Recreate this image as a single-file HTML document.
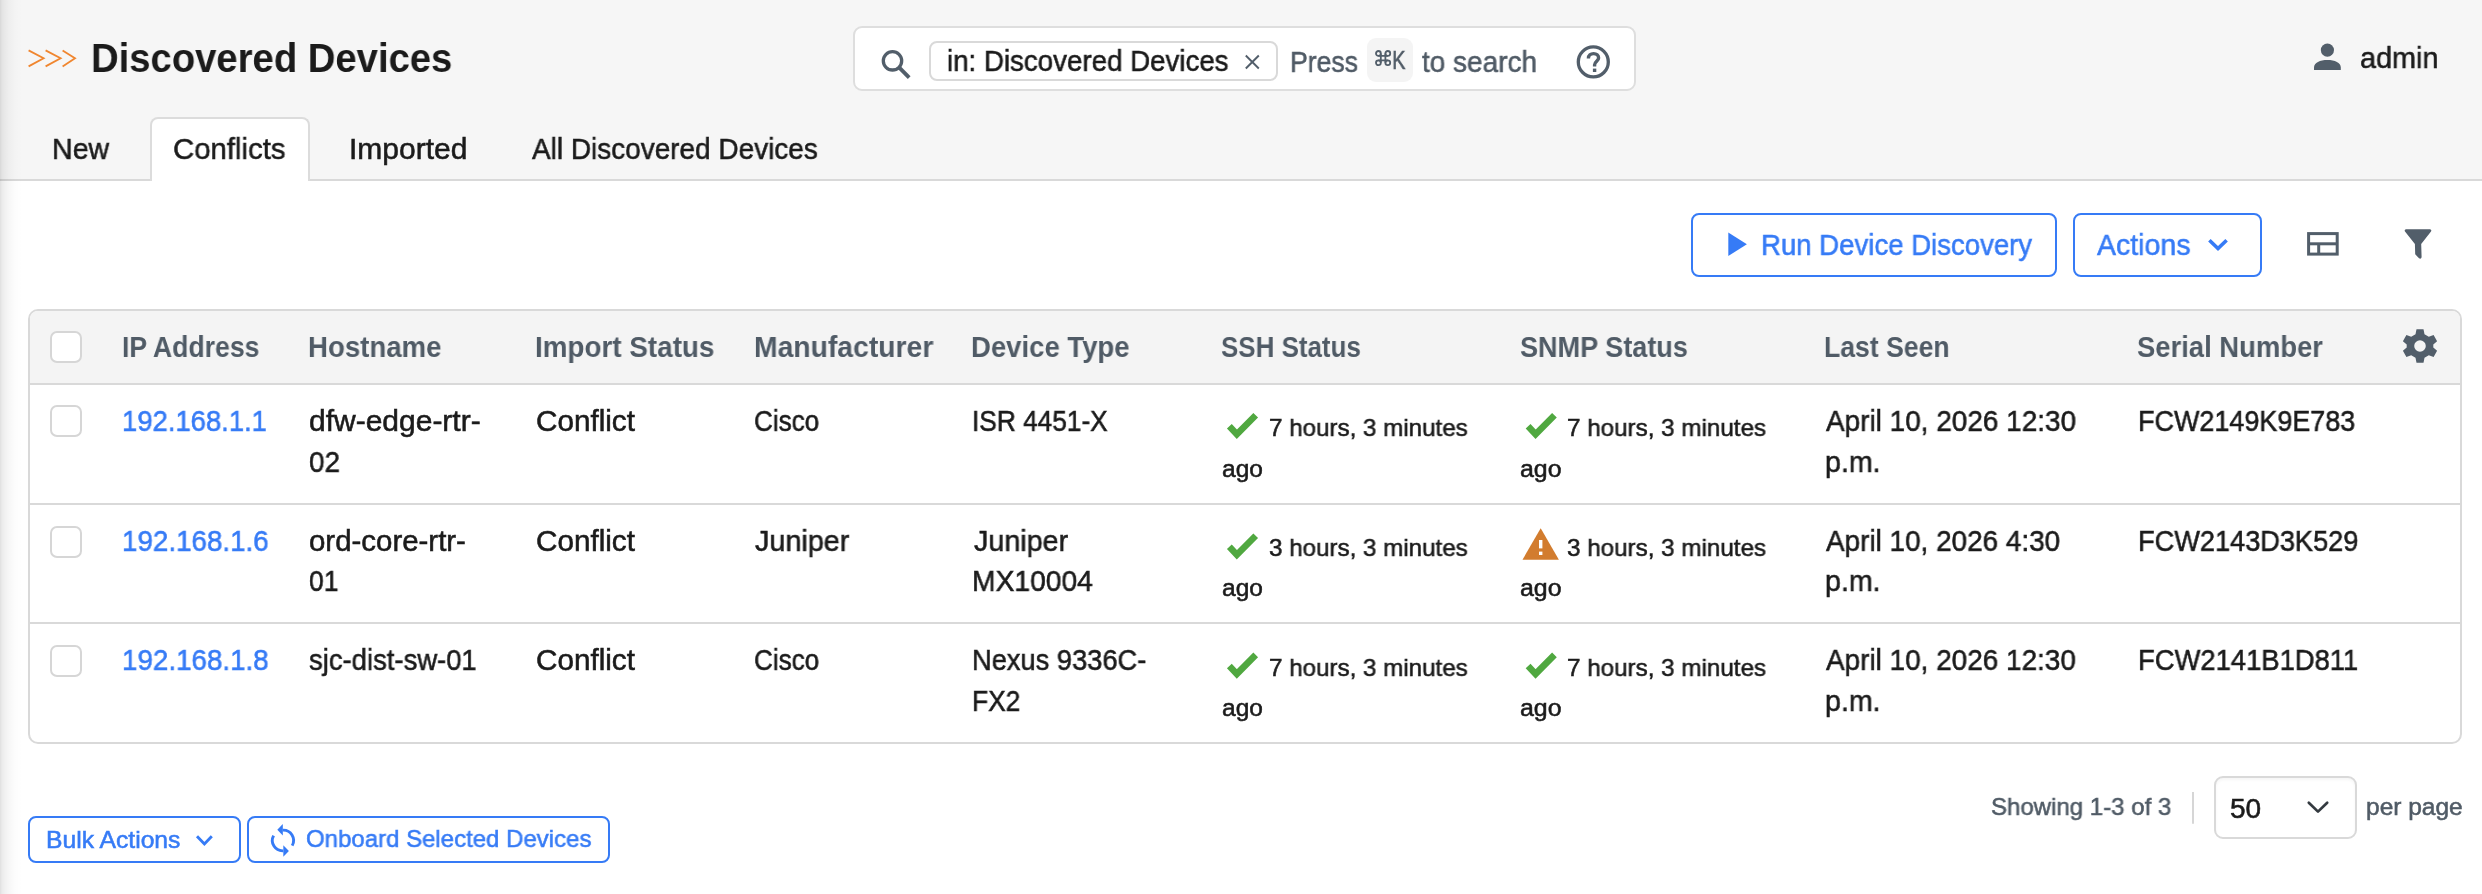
<!DOCTYPE html>
<html><head><meta charset="utf-8"><style>
html,body{margin:0;padding:0}
body{width:2482px;height:894px;overflow:hidden;position:relative;background:#fff;font-family:"Liberation Sans",sans-serif}
.abs{position:absolute}
.t{position:absolute;white-space:pre;line-height:1;transform-origin:0 0;will-change:transform}
.hdr{position:absolute;left:0;top:0;width:2482px;height:180px;background:#f6f6f6}
.hline{position:absolute;left:0;top:179px;width:2482px;height:2px;background:#d9d9d9}
.tabact{position:absolute;left:150px;top:117px;width:156px;height:62px;background:#fff;border:2px solid #dcdcdc;border-bottom:none;border-radius:8px 8px 0 0}
.btn{position:absolute;border:2px solid #367bf6;border-radius:8px}
.cb{position:absolute;width:28px;height:28px;border:2px solid #d6d6d6;border-radius:7px;background:#fff}
.shadow{position:absolute;left:0;top:0;width:24px;height:894px;background:linear-gradient(to right,rgba(0,0,0,0.125) 0px,rgba(0,0,0,0.08) 2px,rgba(0,0,0,0.055) 5px,rgba(0,0,0,0.03) 9px,rgba(0,0,0,0.012) 15px,rgba(0,0,0,0) 22px)}
</style></head>
<body>

<div class="hdr"></div>
<div class="hline"></div>
<div class="tabact"></div>
<!-- chevrons -->
<svg class="abs" style="left:0;top:0" width="120" height="100">
  <g fill="none" stroke="#f0862f" stroke-width="1.8" stroke-linecap="butt" stroke-linejoin="miter">
    <polyline points="28.6,50.4 43.6,58.3 28.6,66.4"/>
    <polyline points="45.6,50.4 60.6,58.3 45.6,66.4"/>
    <polyline points="62.6,50.4 75,58.3 62.6,66.4"/>
  </g>
</svg>
<div class="abs" style="left:853px;top:26px;width:779px;height:61px;border:2px solid #dedede;border-radius:9px;background:#fff"></div>
<svg class="abs" style="left:0;top:0" width="1700" height="100">
  <circle cx="892.5" cy="60.8" r="9.2" fill="none" stroke="#525e6a" stroke-width="3.3"/>
  <line x1="899.3" y1="67.6" x2="909.2" y2="77.6" stroke="#525e6a" stroke-width="3.9"/>
  <line x1="1245.8" y1="55.5" x2="1258.8" y2="68.5" stroke="#525e6a" stroke-width="1.9"/>
  <line x1="1258.8" y1="55.5" x2="1245.8" y2="68.5" stroke="#525e6a" stroke-width="1.9"/>
  <circle cx="1593.3" cy="61.9" r="15" fill="none" stroke="#525e6a" stroke-width="3.3"/>
  <path d="M1588.4 58.4 C1588.4 55.3 1590.7 53.6 1593.6 53.6 C1596.5 53.6 1598.6 55.5 1598.6 57.9 C1598.6 60.9 1594.6 61.5 1594.6 64.8 L1594.6 66.6" fill="none" stroke="#525e6a" stroke-width="3.4"/>
  <rect x="1592.9" y="68.6" width="3.4" height="3.4" fill="#525e6a"/>
</svg>
<div class="abs" style="left:929px;top:41px;width:345px;height:36px;border:2px solid #d9d9d9;border-radius:8px"></div>
<div class="abs" style="left:1367px;top:38px;width:46px;height:44px;background:#f4f4f4;border-radius:9px"></div>
<svg class="abs" style="left:1374.5px;top:49.8px" width="17" height="17" viewBox="0 0 17 17">
 <g fill="none" stroke="#525e6a" stroke-width="1.8">
  <circle cx="3.4" cy="3.4" r="2.4"/><circle cx="12.8" cy="3.4" r="2.4"/><circle cx="3.4" cy="12.8" r="2.4"/><circle cx="12.8" cy="12.8" r="2.4"/>
  <path d="M5.8 3.4 V12.8 M10.4 3.4 V12.8 M3.4 5.8 H12.8 M3.4 10.4 H12.8"/>
 </g>
</svg>
<svg class="abs" style="left:2300px;top:30px" width="60" height="60">
  <circle cx="27.4" cy="20.1" r="6.6" fill="#525e6a"/>
  <path d="M14 40 L14 37.5 C14 32.5 20 30 27.4 30 C34.8 30 40.8 32.5 40.8 37.5 L40.8 40 Z" fill="#525e6a"/>
</svg>
<!-- buttons -->
<div class="btn" style="left:1691px;top:213px;width:362px;height:60px"></div>
<div class="btn" style="left:2073px;top:213px;width:185px;height:60px"></div>
<svg class="abs" style="left:0;top:200px" width="2482" height="70">
  <path d="M1728.3 32.6 L1746.9 44.2 L1728.3 55.9 Z" fill="#367bf6"/>
  <polyline points="2209.4,40.2 2218,48.6 2226.6,40.2" fill="none" stroke="#367bf6" stroke-width="3.6"/>
  <rect x="2308.6" y="33.6" width="28.6" height="20.5" fill="none" stroke="#525e6a" stroke-width="3"/>
  <line x1="2308.6" y1="43.8" x2="2337.2" y2="43.8" stroke="#525e6a" stroke-width="3"/>
  <line x1="2318.7" y1="43.8" x2="2318.7" y2="54" stroke="#525e6a" stroke-width="3"/>
  <path d="M2406 29.2 L2430 29.2 Q2432 29.6 2431 31.5 L2421.2 44 L2421.6 57.3 Q2421 59.5 2419 58.3 L2415.2 54.2 L2414.9 44 L2405 31.5 Q2404 29.6 2406 29.2 Z" fill="#525e6a"/>
</svg>
<!-- table -->
<div class="abs" style="left:28px;top:309px;width:2430px;height:431px;border:2px solid #d9d9d9;border-radius:10px;overflow:hidden;background:#fff">
  <div style="position:absolute;left:0;top:0;right:0;height:72px;background:#f4f4f4;border-bottom:2px solid #d9d9d9"></div>
  <div style="position:absolute;left:0;top:192px;right:0;height:2px;background:#d9d9d9"></div>
  <div style="position:absolute;left:0;top:311px;right:0;height:2px;background:#d9d9d9"></div>
</div>
<div class="cb" style="left:50px;top:331px"></div>
<div class="cb" style="left:50px;top:405px"></div>
<div class="cb" style="left:50px;top:525.5px"></div>
<div class="cb" style="left:50px;top:644.5px"></div>
<svg class="abs" style="left:2400px;top:326px" width="40" height="40" viewBox="0 0 40 40">
 <path fill="#525e6a" fill-rule="evenodd" d="M16.5 3.3 L23.5 3.3 L24.5 8.2 L28.8 10.7 L33.6 9.1 L37.1 15.2 L33.3 18.5 L33.3 21.5 L37.1 24.8 L33.6 30.9 L28.8 29.3 L24.5 31.8 L23.5 36.7 L16.5 36.7 L15.5 31.8 L11.2 29.3 L6.4 30.9 L2.9 24.8 L6.7 21.5 L6.7 18.5 L2.9 15.2 L6.4 9.1 L11.2 10.7 L15.5 8.2 Z M20 14.2 A5.8 5.8 0 1 0 20 25.8 A5.8 5.8 0 1 0 20 14.2 Z"/>
</svg>
<svg class="abs" style="left:0;top:0" width="2482" height="894"><path d="M1229.35 426.20 L1236.85 434.20 L1255.70 415.20" fill="none" stroke="#50a840" stroke-width="6.6" stroke-linejoin="miter"/><path d="M1528.10 426.20 L1535.60 434.20 L1554.45 415.20" fill="none" stroke="#50a840" stroke-width="6.6" stroke-linejoin="miter"/><path d="M1229.35 546.70 L1236.85 554.70 L1255.70 535.70" fill="none" stroke="#50a840" stroke-width="6.6" stroke-linejoin="miter"/><path d="M1540.7 528.30 L1558.9 559.70 L1522.5 559.70 Z" fill="#d27c2e"/><rect x="1539" y="540.00" width="3.4" height="8.4" fill="#fff"/><rect x="1539" y="551.60" width="3.4" height="3.4" fill="#fff"/><path d="M1229.35 665.90 L1236.85 673.90 L1255.70 654.90" fill="none" stroke="#50a840" stroke-width="6.6" stroke-linejoin="miter"/><path d="M1528.10 665.90 L1535.60 673.90 L1554.45 654.90" fill="none" stroke="#50a840" stroke-width="6.6" stroke-linejoin="miter"/></svg>

<div class="btn" style="left:28px;top:816px;width:209px;height:43px"></div>
<div class="btn" style="left:247px;top:816px;width:359px;height:43px"></div>
<svg class="abs" style="left:0;top:780px" width="2482" height="100">
  <polyline points="197,56.3 204.4,64 211.8,56.3" fill="none" stroke="#367bf6" stroke-width="2.9"/>
  <g fill="none" stroke="#367bf6" stroke-width="2.9">
    <path d="M282.6 50.2 A10.3 10.3 0 0 1 292.2 65.6"/>
    <path d="M273.6 55.6 A10.3 10.3 0 0 0 283.3 70.8"/>
  </g>
  <path d="M277.3 49.8 L282.8 44 L282.8 55.6 Z" fill="#367bf6"/>
  <path d="M288.9 71 L283.3 65.3 L283.3 76.8 Z" fill="#367bf6"/>
  <line x1="2193" y1="12" x2="2193" y2="43.7" stroke="#d6d6d6" stroke-width="2"/>
  <polyline points="2308.8,22.7 2318,31.6 2327.2,22.7" fill="none" stroke="#343a40" stroke-width="2.7" stroke-linecap="round" stroke-linejoin="round"/>
</svg>
<div class="abs" style="left:2214px;top:776px;width:139px;height:59px;border:2px solid #d9d9d9;border-radius:9px;box-shadow:inset 0 2px 3px rgba(0,0,0,0.04)"></div>

<span id="title" class="t" style="left:91.00px;top:36.97px;font-size:41.5px;font-weight:700;color:#1b1b1b;transform:scaleX(0.9214);-webkit-text-stroke:0px #1b1b1b">Discovered Devices</span>
<span id="chip" class="t" style="left:946.80px;top:45.61px;font-size:30px;font-weight:400;color:#1b1b1b;transform:scaleX(0.9228);-webkit-text-stroke:0.55px #1b1b1b">in: Discovered Devices</span>
<span id="press" class="t" style="left:1290.40px;top:46.51px;font-size:30px;font-weight:400;color:#505b66;transform:scaleX(0.8852);-webkit-text-stroke:0.55px #505b66">Press</span>
<span id="kbd" class="t" style="left:1392.00px;top:46.89px;font-size:26px;font-weight:400;color:#505b66;transform:scaleX(0.7816);-webkit-text-stroke:0.55px #505b66">K</span>
<span id="tosearch" class="t" style="left:1422.40px;top:46.51px;font-size:30px;font-weight:400;color:#505b66;transform:scaleX(0.9321);-webkit-text-stroke:0.55px #505b66">to search</span>
<span id="admin" class="t" style="left:2359.60px;top:42.51px;font-size:30px;font-weight:400;color:#1b1b1b;transform:scaleX(0.9609);-webkit-text-stroke:0.55px #1b1b1b">admin</span>
<span id="tab_new" class="t" style="left:51.90px;top:133.50px;font-size:30px;font-weight:400;color:#1b1b1b;transform:scaleX(0.9530);-webkit-text-stroke:0.55px #1b1b1b">New</span>
<span id="tab_conf" class="t" style="left:173.40px;top:133.80px;font-size:30px;font-weight:400;color:#1b1b1b;transform:scaleX(0.9781);-webkit-text-stroke:0.55px #1b1b1b">Conflicts</span>
<span id="tab_imp" class="t" style="left:349.00px;top:133.50px;font-size:30px;font-weight:400;color:#1b1b1b;transform:scaleX(0.9985);-webkit-text-stroke:0.55px #1b1b1b">Imported</span>
<span id="tab_all" class="t" style="left:532.40px;top:133.50px;font-size:30px;font-weight:400;color:#1b1b1b;transform:scaleX(0.9317);-webkit-text-stroke:0.55px #1b1b1b">All Discovered Devices</span>
<span id="run" class="t" style="left:1761.40px;top:230.20px;font-size:30px;font-weight:400;color:#367bf6;transform:scaleX(0.9188);-webkit-text-stroke:0.55px #367bf6">Run Device Discovery</span>
<span id="actions" class="t" style="left:2096.80px;top:230.20px;font-size:30px;font-weight:400;color:#367bf6;transform:scaleX(0.9501);-webkit-text-stroke:0.55px #367bf6">Actions</span>
<span id="h_ip" class="t" style="left:122.20px;top:333.45px;font-size:29px;font-weight:700;color:#505b66;transform:scaleX(0.9164);-webkit-text-stroke:0px #505b66">IP Address</span>
<span id="h_host" class="t" style="left:308.20px;top:333.45px;font-size:29px;font-weight:700;color:#505b66;transform:scaleX(0.9523);-webkit-text-stroke:0px #505b66">Hostname</span>
<span id="h_imp" class="t" style="left:535.40px;top:333.45px;font-size:29px;font-weight:700;color:#505b66;transform:scaleX(0.9599);-webkit-text-stroke:0px #505b66">Import Status</span>
<span id="h_man" class="t" style="left:753.80px;top:333.45px;font-size:29px;font-weight:700;color:#505b66;transform:scaleX(0.9759);-webkit-text-stroke:0px #505b66">Manufacturer</span>
<span id="h_dt" class="t" style="left:971.00px;top:333.45px;font-size:29px;font-weight:700;color:#505b66;transform:scaleX(0.9486);-webkit-text-stroke:0px #505b66">Device Type</span>
<span id="h_ssh" class="t" style="left:1221.20px;top:333.45px;font-size:29px;font-weight:700;color:#505b66;transform:scaleX(0.8943);-webkit-text-stroke:0px #505b66">SSH Status</span>
<span id="h_snmp" class="t" style="left:1520.00px;top:333.45px;font-size:29px;font-weight:700;color:#505b66;transform:scaleX(0.9332);-webkit-text-stroke:0px #505b66">SNMP Status</span>
<span id="h_last" class="t" style="left:1824.20px;top:333.45px;font-size:29px;font-weight:700;color:#505b66;transform:scaleX(0.9166);-webkit-text-stroke:0px #505b66">Last Seen</span>
<span id="h_ser" class="t" style="left:2136.80px;top:333.45px;font-size:29px;font-weight:700;color:#505b66;transform:scaleX(0.9457);-webkit-text-stroke:0px #505b66">Serial Number</span>
<span id="bulk" class="t" style="left:45.50px;top:827.68px;font-size:24px;font-weight:400;color:#367bf6;transform:scaleX(1.0283);-webkit-text-stroke:0.55px #367bf6">Bulk Actions</span>
<span id="onboard" class="t" style="left:306.40px;top:827.26px;font-size:24.5px;font-weight:400;color:#367bf6;transform:scaleX(0.9795);-webkit-text-stroke:0.55px #367bf6">Onboard Selected Devices</span>
<span id="showing" class="t" style="left:1991.20px;top:795.36px;font-size:24.5px;font-weight:400;color:#505b66;transform:scaleX(0.9804);-webkit-text-stroke:0.55px #505b66">Showing 1-3 of 3</span>
<span id="fifty" class="t" style="left:2230.10px;top:794.70px;font-size:28px;font-weight:400;color:#1b1b1b;transform:scaleX(0.9890);-webkit-text-stroke:0.55px #1b1b1b">50</span>
<span id="perpage" class="t" style="left:2365.80px;top:795.36px;font-size:24.5px;font-weight:400;color:#505b66;transform:scaleX(0.9957);-webkit-text-stroke:0.55px #505b66">per page</span>
<span id="r0_ip" class="t" style="left:121.60px;top:406.55px;font-size:29px;font-weight:400;color:#367bf6;transform:scaleX(0.9460);-webkit-text-stroke:0.55px #367bf6">192.168.1.1</span>
<span id="r0_host0" class="t" style="left:309.00px;top:406.55px;font-size:29px;font-weight:400;color:#1b1b1b;transform:scaleX(1.0342);-webkit-text-stroke:0.55px #1b1b1b">dfw-edge-rtr-</span>
<span id="r0_host1" class="t" style="left:309.00px;top:448.25px;font-size:29px;font-weight:400;color:#1b1b1b;transform:scaleX(0.9591);-webkit-text-stroke:0.55px #1b1b1b">02</span>
<span id="r0_imp" class="t" style="left:536.20px;top:406.55px;font-size:29px;font-weight:400;color:#1b1b1b;transform:scaleX(1.0231);-webkit-text-stroke:0.55px #1b1b1b">Conflict</span>
<span id="r0_man" class="t" style="left:754.00px;top:406.55px;font-size:29px;font-weight:400;color:#1b1b1b;transform:scaleX(0.8975);-webkit-text-stroke:0.55px #1b1b1b">Cisco</span>
<span id="r0_dt0" class="t" style="left:972.00px;top:406.55px;font-size:29px;font-weight:400;color:#1b1b1b;transform:scaleX(0.9048);-webkit-text-stroke:0.55px #1b1b1b">ISR 4451-X</span>
<span id="r0_ssh" class="t" style="left:1268.60px;top:415.86px;font-size:24.5px;font-weight:400;color:#1b1b1b;transform:scaleX(0.9862);-webkit-text-stroke:0.55px #1b1b1b">7 hours, 3 minutes</span>
<span id="r0_sshago" class="t" style="left:1221.60px;top:457.36px;font-size:24.5px;font-weight:400;color:#1b1b1b;transform:scaleX(0.9895);-webkit-text-stroke:0.55px #1b1b1b">ago</span>
<span id="r0_snmp" class="t" style="left:1566.60px;top:415.86px;font-size:24.5px;font-weight:400;color:#1b1b1b;transform:scaleX(0.9877);-webkit-text-stroke:0.55px #1b1b1b">7 hours, 3 minutes</span>
<span id="r0_snmpago" class="t" style="left:1520.40px;top:457.36px;font-size:24.5px;font-weight:400;color:#1b1b1b;transform:scaleX(1.0169);-webkit-text-stroke:0.55px #1b1b1b">ago</span>
<span id="r0_last0" class="t" style="left:1826.00px;top:406.55px;font-size:29px;font-weight:400;color:#1b1b1b;transform:scaleX(0.9634);-webkit-text-stroke:0.55px #1b1b1b">April 10, 2026 12:30</span>
<span id="r0_last1" class="t" style="left:1825.00px;top:448.25px;font-size:29px;font-weight:400;color:#1b1b1b;transform:scaleX(0.9858);-webkit-text-stroke:0.55px #1b1b1b">p.m.</span>
<span id="r0_ser" class="t" style="left:2138.10px;top:406.55px;font-size:29px;font-weight:400;color:#1b1b1b;transform:scaleX(0.9295);-webkit-text-stroke:0.55px #1b1b1b">FCW2149K9E783</span>
<span id="r1_ip" class="t" style="left:121.60px;top:527.05px;font-size:29px;font-weight:400;color:#367bf6;transform:scaleX(0.9574);-webkit-text-stroke:0.55px #367bf6">192.168.1.6</span>
<span id="r1_host0" class="t" style="left:309.00px;top:527.05px;font-size:29px;font-weight:400;color:#1b1b1b;transform:scaleX(1.0144);-webkit-text-stroke:0.55px #1b1b1b">ord-core-rtr-</span>
<span id="r1_host1" class="t" style="left:309.00px;top:567.25px;font-size:29px;font-weight:400;color:#1b1b1b;transform:scaleX(0.9125);-webkit-text-stroke:0.55px #1b1b1b">01</span>
<span id="r1_imp" class="t" style="left:536.20px;top:527.05px;font-size:29px;font-weight:400;color:#1b1b1b;transform:scaleX(1.0231);-webkit-text-stroke:0.55px #1b1b1b">Conflict</span>
<span id="r1_man" class="t" style="left:755.00px;top:527.05px;font-size:29px;font-weight:400;color:#1b1b1b;transform:scaleX(0.9918);-webkit-text-stroke:0.55px #1b1b1b">Juniper</span>
<span id="r1_dt0" class="t" style="left:974.00px;top:527.05px;font-size:29px;font-weight:400;color:#1b1b1b;transform:scaleX(0.9895);-webkit-text-stroke:0.55px #1b1b1b">Juniper</span>
<span id="r1_dt1" class="t" style="left:972.00px;top:567.25px;font-size:29px;font-weight:400;color:#1b1b1b;transform:scaleX(0.9731);-webkit-text-stroke:0.55px #1b1b1b">MX10004</span>
<span id="r1_ssh" class="t" style="left:1268.60px;top:536.36px;font-size:24.5px;font-weight:400;color:#1b1b1b;transform:scaleX(0.9862);-webkit-text-stroke:0.55px #1b1b1b">3 hours, 3 minutes</span>
<span id="r1_sshago" class="t" style="left:1221.60px;top:576.36px;font-size:24.5px;font-weight:400;color:#1b1b1b;transform:scaleX(0.9895);-webkit-text-stroke:0.55px #1b1b1b">ago</span>
<span id="r1_snmp" class="t" style="left:1566.60px;top:536.36px;font-size:24.5px;font-weight:400;color:#1b1b1b;transform:scaleX(0.9877);-webkit-text-stroke:0.55px #1b1b1b">3 hours, 3 minutes</span>
<span id="r1_snmpago" class="t" style="left:1520.40px;top:576.36px;font-size:24.5px;font-weight:400;color:#1b1b1b;transform:scaleX(1.0169);-webkit-text-stroke:0.55px #1b1b1b">ago</span>
<span id="r1_last0" class="t" style="left:1826.00px;top:527.05px;font-size:29px;font-weight:400;color:#1b1b1b;transform:scaleX(0.9618);-webkit-text-stroke:0.55px #1b1b1b">April 10, 2026 4:30</span>
<span id="r1_last1" class="t" style="left:1825.00px;top:567.25px;font-size:29px;font-weight:400;color:#1b1b1b;transform:scaleX(0.9858);-webkit-text-stroke:0.55px #1b1b1b">p.m.</span>
<span id="r1_ser" class="t" style="left:2138.10px;top:527.05px;font-size:29px;font-weight:400;color:#1b1b1b;transform:scaleX(0.9365);-webkit-text-stroke:0.55px #1b1b1b">FCW2143D3K529</span>
<span id="r2_ip" class="t" style="left:121.60px;top:646.25px;font-size:29px;font-weight:400;color:#367bf6;transform:scaleX(0.9574);-webkit-text-stroke:0.55px #367bf6">192.168.1.8</span>
<span id="r2_host0" class="t" style="left:309.00px;top:646.25px;font-size:29px;font-weight:400;color:#1b1b1b;transform:scaleX(0.9464);-webkit-text-stroke:0.55px #1b1b1b">sjc-dist-sw-01</span>
<span id="r2_imp" class="t" style="left:536.20px;top:646.25px;font-size:29px;font-weight:400;color:#1b1b1b;transform:scaleX(1.0231);-webkit-text-stroke:0.55px #1b1b1b">Conflict</span>
<span id="r2_man" class="t" style="left:754.00px;top:646.25px;font-size:29px;font-weight:400;color:#1b1b1b;transform:scaleX(0.8975);-webkit-text-stroke:0.55px #1b1b1b">Cisco</span>
<span id="r2_dt0" class="t" style="left:972.00px;top:646.25px;font-size:29px;font-weight:400;color:#1b1b1b;transform:scaleX(0.9399);-webkit-text-stroke:0.55px #1b1b1b">Nexus 9336C-</span>
<span id="r2_dt1" class="t" style="left:972.00px;top:687.05px;font-size:29px;font-weight:400;color:#1b1b1b;transform:scaleX(0.9091);-webkit-text-stroke:0.55px #1b1b1b">FX2</span>
<span id="r2_ssh" class="t" style="left:1268.60px;top:655.56px;font-size:24.5px;font-weight:400;color:#1b1b1b;transform:scaleX(0.9862);-webkit-text-stroke:0.55px #1b1b1b">7 hours, 3 minutes</span>
<span id="r2_sshago" class="t" style="left:1221.60px;top:696.16px;font-size:24.5px;font-weight:400;color:#1b1b1b;transform:scaleX(0.9895);-webkit-text-stroke:0.55px #1b1b1b">ago</span>
<span id="r2_snmp" class="t" style="left:1566.60px;top:655.56px;font-size:24.5px;font-weight:400;color:#1b1b1b;transform:scaleX(0.9877);-webkit-text-stroke:0.55px #1b1b1b">7 hours, 3 minutes</span>
<span id="r2_snmpago" class="t" style="left:1520.40px;top:696.16px;font-size:24.5px;font-weight:400;color:#1b1b1b;transform:scaleX(1.0169);-webkit-text-stroke:0.55px #1b1b1b">ago</span>
<span id="r2_last0" class="t" style="left:1826.00px;top:646.25px;font-size:29px;font-weight:400;color:#1b1b1b;transform:scaleX(0.9626);-webkit-text-stroke:0.55px #1b1b1b">April 10, 2026 12:30</span>
<span id="r2_last1" class="t" style="left:1825.00px;top:687.05px;font-size:29px;font-weight:400;color:#1b1b1b;transform:scaleX(0.9858);-webkit-text-stroke:0.55px #1b1b1b">p.m.</span>
<span id="r2_ser" class="t" style="left:2138.10px;top:646.25px;font-size:29px;font-weight:400;color:#1b1b1b;transform:scaleX(0.9444);-webkit-text-stroke:0.55px #1b1b1b">FCW2141B1D811</span>
<div class="shadow"></div>
</body></html>
